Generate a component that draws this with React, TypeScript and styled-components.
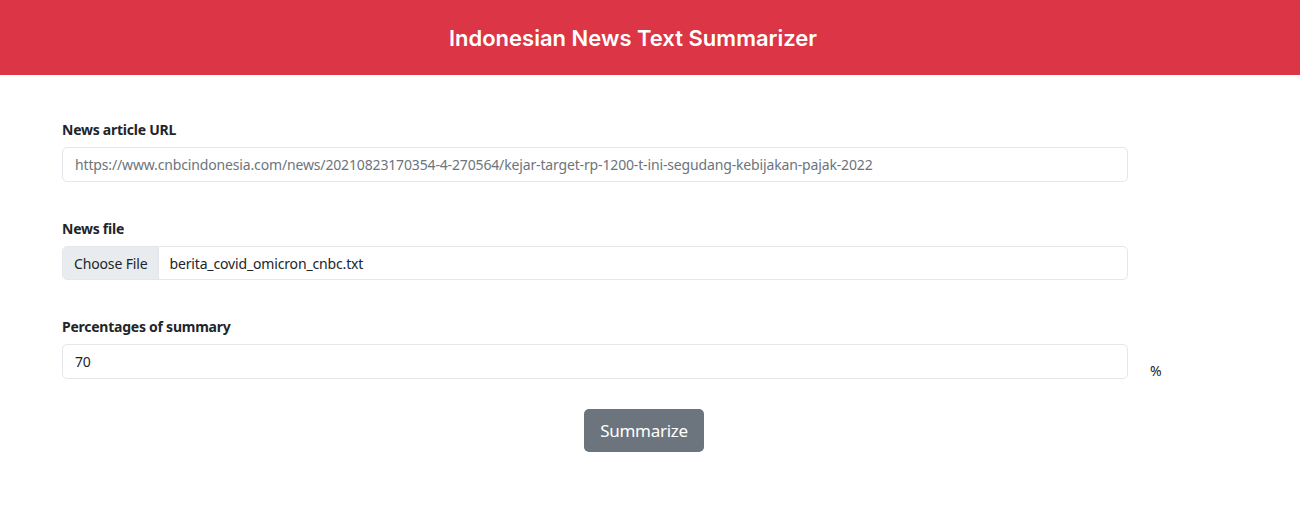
import React from "react";
import styled, { createGlobalStyle } from "styled-components";

const Global = createGlobalStyle`
  html, body { margin: 0; padding: 0; background: #fff; }
  body { font-family: "Noto Sans", "Open Sans", sans-serif; color: #212529; font-size: 14px; letter-spacing: -0.15px; }
  * { box-sizing: border-box; }
`;

const Header = styled.header`
  height: 75px;
  background: #dc3545;
  display: flex;
  align-items: center;
  justify-content: center;
  padding-right: 34px;
`;

const Title = styled.h1`
  margin: 0;
  color: #fff;
  font-family: Inter, "Noto Sans", sans-serif;
  font-weight: 600;
  font-size: 22px;
  letter-spacing: 0;
`;

const Form = styled.form`
  padding: 44px 0 0 62px;
  display: flex;
  flex-direction: column;
  gap: 36px;
`;

const Group = styled.div`
  display: flex;
  flex-direction: column;
  gap: 7px;
`;

const Label = styled.label`
  font-weight: 700;
  font-size: 14px;
  line-height: 21px;
  letter-spacing: -0.25px;
`;

const InputRow = styled.div`
  display: flex;
  align-items: flex-end;
  gap: 22px;
`;

const TextBox = styled.div<{ $muted?: boolean }>`
  width: 1066px;
  height: 35px;
  border: 1px solid #e3e6ea;
  border-radius: 5px;
  padding: 0 12px;
  display: flex;
  align-items: center;
  font-size: 14px;
  color: ${(p) => (p.$muted ? "#6c757d" : "#212529")};
  white-space: nowrap;
  overflow: hidden;
`;

const FileBox = styled.div`
  width: 1066px;
  height: 34px;
  border: 1px solid #e3e6ea;
  border-radius: 5px;
  display: flex;
  align-items: stretch;
  overflow: hidden;
  font-size: 14px;
`;

const FileButton = styled.span`
  background: #e9ecef;
  border-right: 1px solid #e3e6ea;
  padding: 0 11px;
  display: flex;
  align-items: center;
  color: #212529;
`;

const FileName = styled.span`
  padding: 0 10px;
  display: flex;
  align-items: center;
`;

const Percent = styled.span`
  font-size: 14px;
  line-height: 21px;
  margin-bottom: -2px;
`;

const ButtonRow = styled.div`
  display: flex;
  justify-content: center;
  padding: 30px 12px 0 0;
`;

const Button = styled.button`
  background: #6c757d;
  color: #fff;
  border: none;
  border-radius: 5px;
  font-family: "Noto Sans", "Open Sans", sans-serif;
  font-size: 17px;
  letter-spacing: -0.3px;
  height: 43px;
  padding: 0 16px;
`;

export default function App() {
  return (
    <>
      <Global />
      <Header>
        <Title>Indonesian News Text Summarizer</Title>
      </Header>
      <Form onSubmit={(e) => e.preventDefault()}>
        <Group>
          <Label>News article URL</Label>
          <TextBox $muted>
            https://www.cnbcindonesia.com/news/20210823170354-4-270564/kejar-target-rp-1200-t-ini-segudang-kebijakan-pajak-2022
          </TextBox>
        </Group>
        <Group>
          <Label>News file</Label>
          <FileBox>
            <FileButton>Choose File</FileButton>
            <FileName>berita_covid_omicron_cnbc.txt</FileName>
          </FileBox>
        </Group>
        <Group>
          <Label>Percentages of summary</Label>
          <InputRow>
            <TextBox>70</TextBox>
            <Percent>%</Percent>
          </InputRow>
        </Group>
      </Form>
      <ButtonRow>
        <Button type="button">Summarize</Button>
      </ButtonRow>
    </>
  );
}
